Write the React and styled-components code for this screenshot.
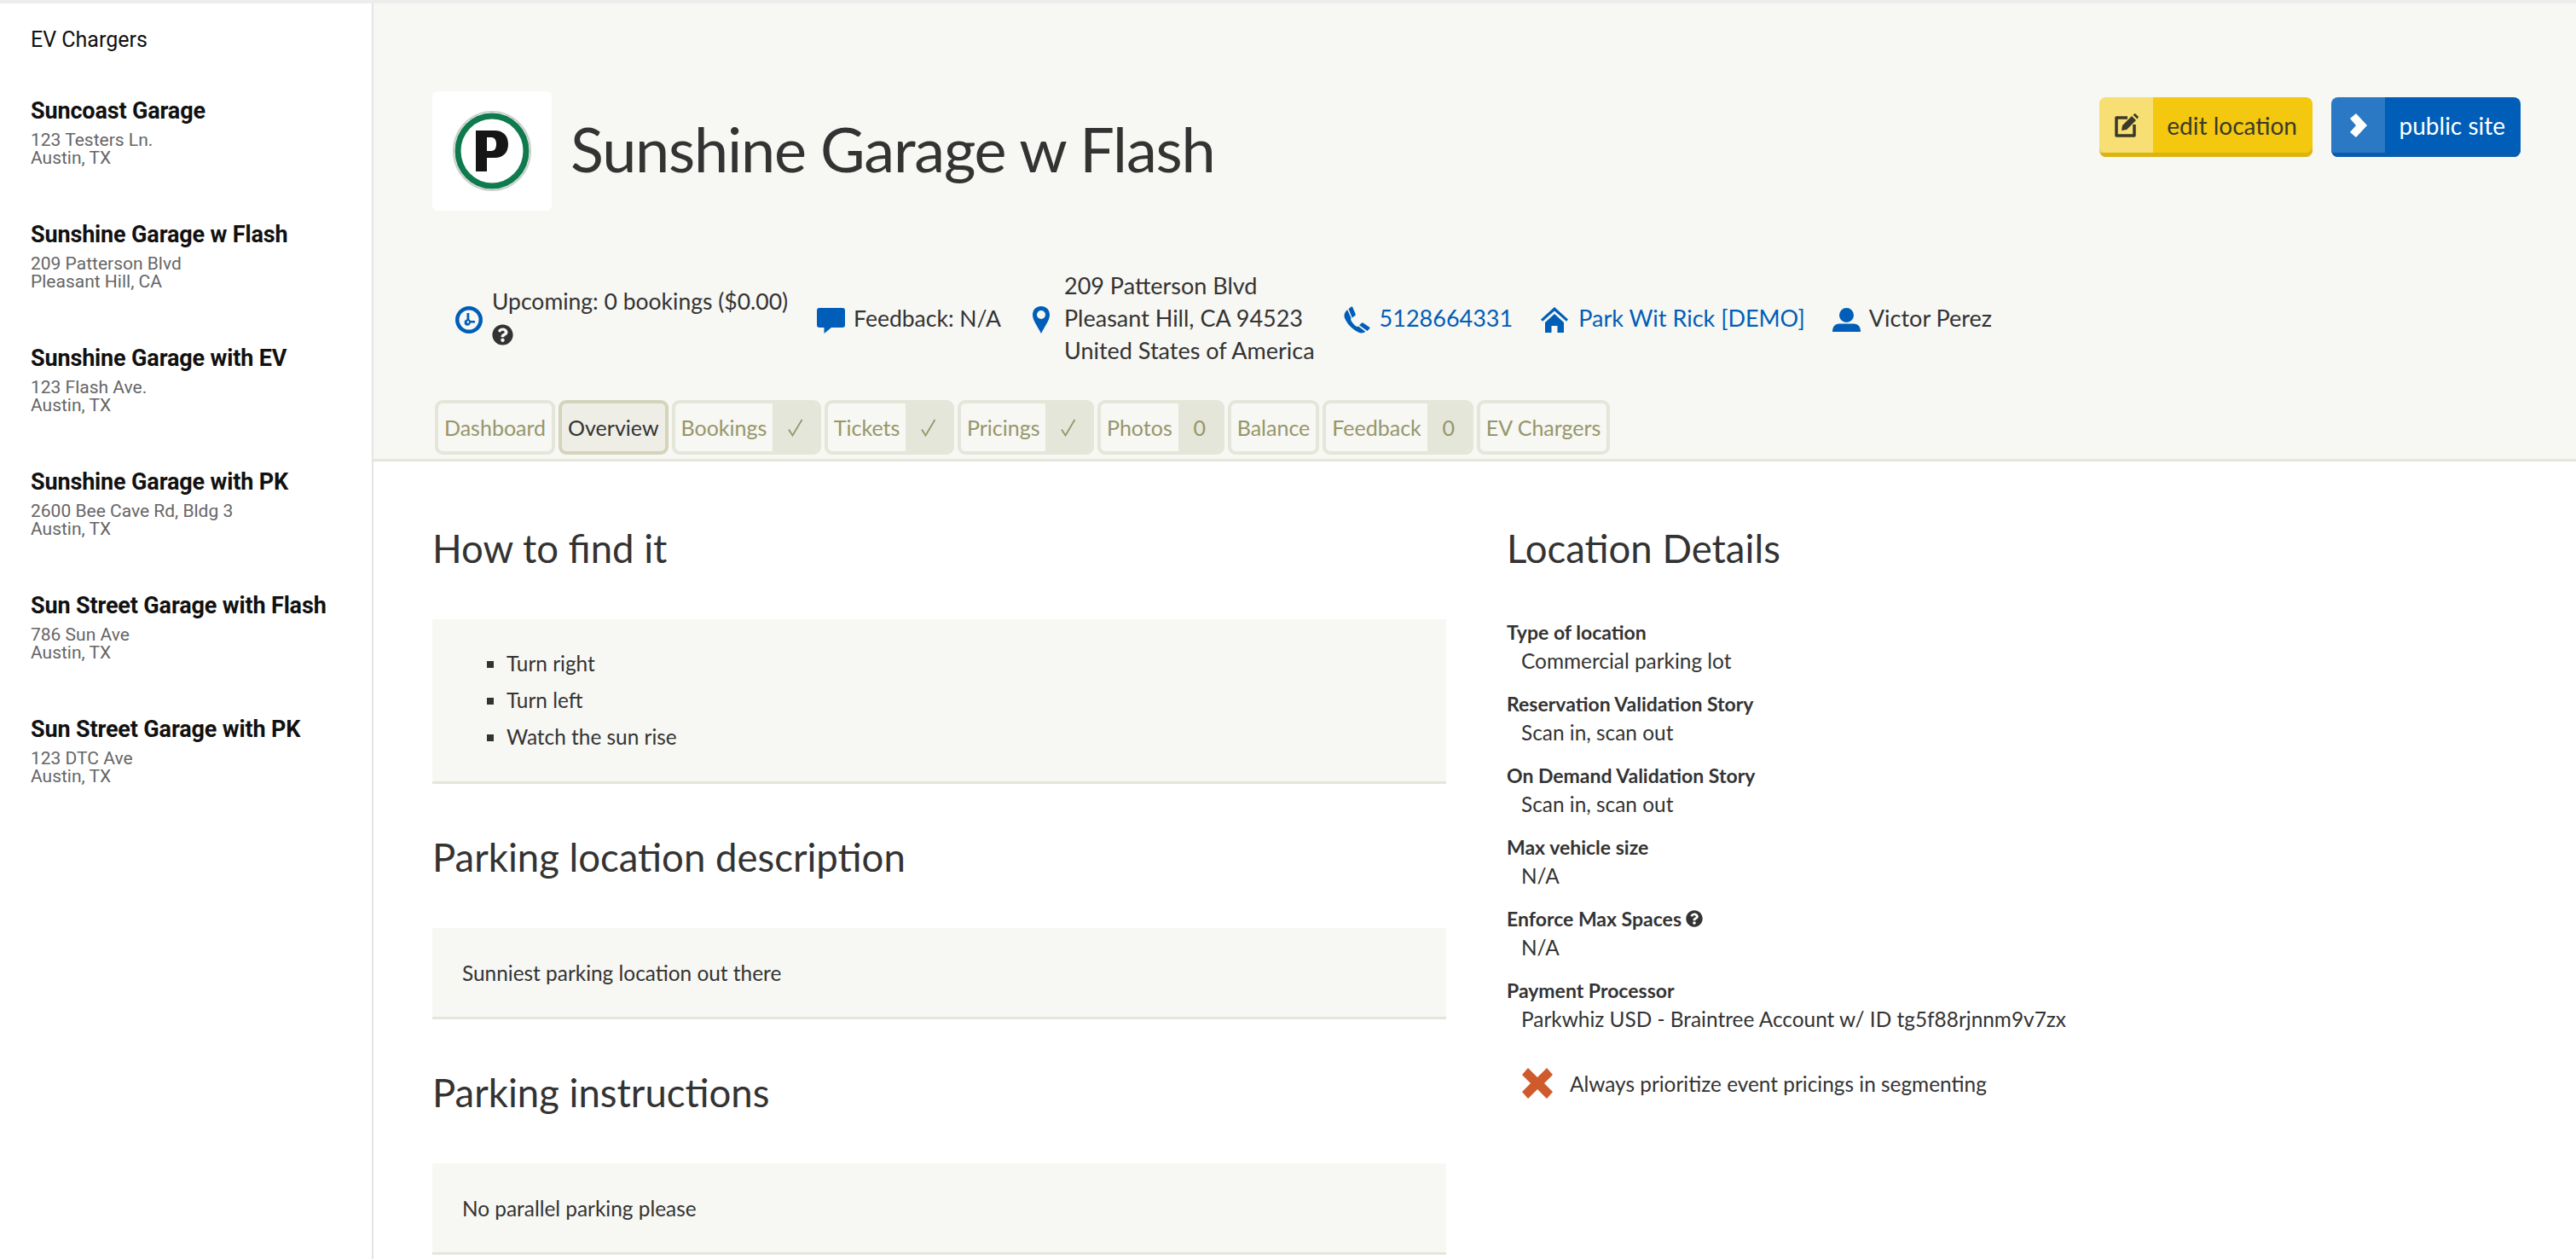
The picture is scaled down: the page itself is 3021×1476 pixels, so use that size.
import React from 'react';
import styled, { createGlobalStyle } from 'styled-components';
import { FaQuestionCircle } from 'react-icons/fa';

const GlobalStyle = createGlobalStyle`
   html, body {
      margin: 0;
      height: 100%;
      background: #fff;
      overflow: hidden;
   }
   * { box-sizing: border-box; }
`;

const Page = styled.div`
   display: flex;
   height: 1476px;
   overflow: hidden;
   font-family: Lato, sans-serif;
   color: #333;
   border-top: 4px solid #eceded;
`;

const Sidebar = styled.aside`
   width: 438px;
   flex: none;
   padding: 28px 36px 0;
   border-right: 2px solid #e4e4e4;
   font-family: Roboto, sans-serif;
   color: #111;
`;

const SideTitle = styled.div`
   font-size: 25px;
   line-height: 30px;
   margin-bottom: 52px;
`;

const SideItem = styled.div`
   height: 145px;
`;

const SideName = styled.div`
   font-size: 27px;
   line-height: 32px;
   font-weight: 700;
   letter-spacing: -0.15px;
   margin-bottom: 8px;
   white-space: nowrap;
`;

const SideAddr = styled.div`
   font-size: 21px;
   line-height: 21px;
   color: #666;
`;

const Main = styled.main`
   flex: 1;
   min-width: 0;
`;

const Header = styled.header`
   background: #f7f7f3;
   height: 537px;
   padding: 103px 65px 0 69px;
   border-bottom: 3px solid #e5e6da;
   display: flex;
   flex-direction: column;
`;

const TopRow = styled.div`
   display: flex;
   justify-content: space-between;
   align-items: flex-start;
   height: 140px;
`;

const TitleWrap = styled.div`
   display: flex;
   align-items: center;
   gap: 22px;
`;

const LogoBox = styled.div`
   width: 140px;
   height: 140px;
   background: #fff;
   border-radius: 6px;
   display: flex;
   align-items: center;
   justify-content: center;
`;

const Title = styled.h1`
   margin: 0 0 6px;
   font-size: 72px;
   font-weight: 400;
   letter-spacing: -1.2px;
   color: #333;
`;

const Buttons = styled.div`
   display: flex;
   gap: 22px;
   margin-top: 7px;
`;

const ActionButton = styled.a`
   display: flex;
   height: 70px;
   width: ${({ $w }) => $w}px;
   border-radius: 8px;
   overflow: hidden;
   font-size: 28px;
   color: ${({ $blue }) => ($blue ? '#fff' : '#3a3a2a')};
   background: ${({ $blue }) => ($blue ? '#005eb8' : '#f3c80f')};
   box-shadow: inset 0 -5px 0 ${({ $blue }) => ($blue ? '#0a5cb0' : '#dcb40e')};
`;

const ButtonIcon = styled.span`
   width: 63px;
   height: 65px;
   display: flex;
   align-items: center;
   justify-content: center;
   background: rgba(255, 255, 255, ${({ $blue }) => ($blue ? 0.17 : 0.42)});
`;

const ButtonText = styled.span`
   flex: 1;
   height: 65px;
   display: flex;
   align-items: center;
   justify-content: flex-end;
   padding-right: 18px;
`;

const MetaRow = styled.div`
   display: flex;
   align-items: center;
   margin-top: 69px;
   padding-left: 27px;
   line-height: 38px;
   height: 114px;
   white-space: nowrap;
`;

const MetaItem = styled.div`
   display: flex;
   align-items: center;
   font-size: ${({ $small }) => ($small ? 26.5 : 27)}px;
   margin-right: ${({ $gap }) => $gap}px;
   color: ${({ $link }) => ($link ? '#005eb8' : '#333')};
`;

const MetaIcon = styled.svg`
   flex: none;
   fill: #005eb8;
   width: ${({ $w }) => $w}px;
   height: 32px;
   margin-top: 4px;
   margin-right: ${({ $mr }) => $mr}px;
`;

const HelpIcon = styled(FaQuestionCircle)`
   display: block;
   font-size: ${({ $size }) => $size}px;
   color: #333;
`;

const UpcomingHelp = styled(HelpIcon)`
   margin: 8px 0;
`;

const TabRow = styled.nav`
   display: flex;
   gap: 4px;
   margin-top: auto;
   margin-left: 3px;
   height: 69px;
   padding-bottom: 5px;
`;

const Tab = styled.div`
   display: flex;
   height: 64px;
   border: 4px solid ${({ $active }) => ($active ? '#d3d4bb' : '#e5e6da')};
   border-radius: 9px;
   overflow: hidden;
   font-size: 25px;
   color: ${({ $active }) => ($active ? '#333' : '#96966a')};
   background: ${({ $active }) => ($active ? '#eeeee6' : '#f7f7f3')};
`;

const TabLabel = styled.span`
   display: flex;
   align-items: center;
   padding: 0 7px;
`;

const TabCount = styled.span`
   display: flex;
   align-items: center;
   justify-content: center;
   width: ${({ $w }) => $w}px;
   background: #e5e6da;
`;

const Content = styled.div`
   display: flex;
   padding: 16px 0 0 69px;
`;

const LeftCol = styled.section`
   width: 1189px;
   flex: none;
`;

const RightCol = styled.section`
   margin-left: 71px;
`;

const SectionHead = styled.h2`
   margin: 0 0 55px;
   font-size: 45.5px;
   font-weight: 400;
   line-height: 56px;
   padding-top: 58px;
   color: #333;
`;

const Panel = styled.div`
   background: #f7f7f3;
   border-bottom: 3px solid #e5e6da;
   padding: 0 35px;
   font-size: 24.4px;
   min-height: 107px;
   display: flex;
   align-items: center;
`;

const Steps = styled.ul`
   list-style: square;
   margin: 0;
   padding: 30px 0 31px 52px;
   li { line-height: 43px; }
`;

const DetailList = styled.dl`
   margin: -2px 0 0;
`;

const DetailLabel = styled.dt`
   font-size: 23px;
   font-weight: 700;
   line-height: 34px;
   display: flex;
   align-items: center;
   gap: 5px;
`;

const DetailValue = styled.dd`
   margin: 0 0 16px 17px;
   font-size: 24.4px;
   line-height: 34px;
`;

const FlagRow = styled.div`
   display: flex;
   align-items: center;
   gap: 20px;
   margin: 40px 0 0 18px;
   font-size: 24.4px;
`;

const sideItems = [
   ['Suncoast Garage', '123 Testers Ln.', 'Austin, TX'],
   ['Sunshine Garage w Flash', '209 Patterson Blvd', 'Pleasant Hill, CA'],
   ['Sunshine Garage with EV', '123 Flash Ave.', 'Austin, TX'],
   ['Sunshine Garage with PK', '2600 Bee Cave Rd, Bldg 3', 'Austin, TX'],
   ['Sun Street Garage with Flash', '786 Sun Ave', 'Austin, TX'],
   ['Sun Street Garage with PK', '123 DTC Ave', 'Austin, TX'],
];

const tabs = [
   { label: 'Dashboard' },
   { label: 'Overview', active: true },
   { label: 'Bookings', checked: true },
   { label: 'Tickets', checked: true },
   { label: 'Pricings', checked: true },
   { label: 'Photos', count: '0' },
   { label: 'Balance' },
   { label: 'Feedback', count: '0' },
   { label: 'EV Chargers' },
];

const details = [
   ['Type of location', 'Commercial parking lot'],
   ['Reservation Validation Story', 'Scan in, scan out'],
   ['On Demand Validation Story', 'Scan in, scan out'],
   ['Max vehicle size', 'N/A'],
   ['Enforce Max Spaces', 'N/A', true],
   ['Payment Processor', 'Parkwhiz USD - Braintree Account w/ ID tg5f88rjnnm9v7zx'],
];

const ParkingLogo = () => (
   <svg width="100" height="100" viewBox="0 0 100 100">
      <ellipse cx="50" cy="50" rx="45" ry="46" fill="#fff" stroke="#c9cfcb" strokeWidth="2" />
      <ellipse cx="50" cy="50" rx="40" ry="41" fill="none" stroke="#0e7a4d" strokeWidth="7" />
      <path fillRule="evenodd" fill="#161616" d="M31 26h22c10 0 16 6 16 16s-6 16-16 16h-9v16H31zM44 34v16h5c4 0 6-3 6-8s-2-8-6-8z" />
   </svg>
);

const CheckMark = () => (
   <svg width="18" height="21" viewBox="0 0 18 21" fill="none" stroke="#96966a" strokeWidth="1.800">
      <path d="M1 12.500L5.500 19.500L16.500 1" />
   </svg>
);

const App = () => (
   <Page>
      <GlobalStyle />
      <Sidebar>
         <SideTitle>EV Chargers</SideTitle>
         {sideItems.map(([name, line1, line2]) => (
            <SideItem key={name}>
               <SideName>{name}</SideName>
               <SideAddr>{line1}</SideAddr>
               <SideAddr>{line2}</SideAddr>
            </SideItem>
         ))}
      </Sidebar>
      <Main>
         <Header>
            <TopRow>
               <TitleWrap>
                  <LogoBox><ParkingLogo /></LogoBox>
                  <Title>Sunshine Garage w Flash</Title>
               </TitleWrap>
               <Buttons>
                  <ActionButton $w={250}>
                     <ButtonIcon>
                        <svg width="28" height="28" viewBox="0 0 28 28">
                           <path fill="none" stroke="#3a3a2a" strokeWidth="3.500" strokeLinejoin="round" d="M15 5H2v21h21V13" />
                           <path fill="#3a3a2a" d="M8 20l1-6L20 3l5 5-11 11zM21.500 1.500L24 0l4 4-1.500 2.500z" />
                        </svg>
                     </ButtonIcon>
                     <ButtonText>edit location</ButtonText>
                  </ActionButton>
                  <ActionButton $w={222} $blue>
                     <ButtonIcon $blue>
                        <svg width="20" height="28" viewBox="0 0 20 28" fill="#fff"><path d="M0 6l7-6 13 14L7 28l-7-6 7-8z" /></svg>
                     </ButtonIcon>
                     <ButtonText>public site</ButtonText>
                  </ActionButton>
               </Buttons>
            </TopRow>
            <MetaRow>
               <MetaItem $gap={34} $small>
                  <MetaIcon $w={32} $mr={11} viewBox="0 0 32 32">
                     <path fillRule="evenodd" d="M16 0a16 16 0 1 1 0 32 16 16 0 0 1 0-32zm0 4.500a11.500 11.500 0 1 0 0 23 11.500 11.500 0 0 0 0-23z" />
                     <path fillRule="evenodd" d="M13.500 8h2.800v7.600c.7.300 1.200.8 1.500 1.400H23v2.600h-5.200a3.600 3.600 0 1 1-4.300-4zm1.300 9.300a1.300 1.300 0 1 0 0 2.600 1.300 1.300 0 0 0 0-2.600z" />
                  </MetaIcon>
                  <div>
                     Upcoming: 0 bookings ($0.00)
                     <UpcomingHelp $size={25} />
                  </div>
               </MetaItem>
               <MetaItem $gap={37} $small>
                  <MetaIcon $w={33} $mr={10} viewBox="0 0 33 32">
                     <path d="M3 2h27a3 3 0 0 1 3 3v17a3 3 0 0 1-3 3H17l-8.500 7v-7H3a3 3 0 0 1-3-3V5a3 3 0 0 1 3-3z" />
                  </MetaIcon>
                  Feedback: N/A
               </MetaItem>
               <MetaItem $gap={34}>
                  <MetaIcon $w={20} $mr={17} viewBox="0 0 20 32">
                     <path fillRule="evenodd" d="M10 0c5.800 0 10 4.300 10 10 0 6.500-5.500 13-10 22C5.500 23 0 16.500 0 10 0 4.300 4.200 0 10 0zm0 5a5 5 0 1 0 0 10 5 5 0 0 0 0-10z" />
                  </MetaIcon>
                  <div>
                     <div>209 Patterson Blvd</div>
                     <div>Pleasant Hill, CA 94523</div>
                     <div>United States of America</div>
                  </div>
               </MetaItem>
               <MetaItem $gap={33} $link>
                  <MetaIcon $w={31} $mr={11} viewBox="0 0 31 32">
                     <path d="M5.500 3.200L9 .3l1.200.6 3.600 8.600-.3 1.200-3.700 2.700z" />
                     <path d="M4.200 4.200l4.400 9.900c-.6.700-.6 1.500-.2 2.400 1.500 3 3.500 5.500 6.300 7.200.8.400 1.600.400 2.300-.2l8.300 6.200c-2 1.600-4.600 2.200-7.200 1.300C10 27.500 3.500 20.500.8 13.200-.3 9.800 1.500 6 4.200 4.200z" />
                     <path d="M18 22.300l3.300-3 1.200.1 7.800 5.400.2 1.100-3 3.200z" />
                  </MetaIcon>
                  5128664331
               </MetaItem>
               <MetaItem $gap={32} $link>
                  <MetaIcon $w={32} $mr={12} viewBox="0 0 32 32">
                     <path d="M16 1L32 15.500l-2 2.300L16 5.500 2 17.800l-2-2.300z" />
                     <path d="M16 9L27 19v12h-7.500v-8h-7v8H5V19z" />
                  </MetaIcon>
                  Park Wit Rick [DEMO]
               </MetaItem>
               <MetaItem $gap={0}>
                  <MetaIcon $w={33} $mr={10} viewBox="0 0 33 32">
                     <path d="M16.500 2a8.500 8.500 0 1 1 0 17 8.500 8.500 0 0 1 0-17z" />
                     <path d="M8 20.500h17c5 0 8 3.500 8 9.500H0c0-6 3-9.500 8-9.500z" />
                  </MetaIcon>
                  Victor Perez
               </MetaItem>
            </MetaRow>
            <TabRow>
               {tabs.map((tab) => (
                  <Tab key={tab.label} $active={tab.active}>
                     <TabLabel>{tab.label}</TabLabel>
                     {tab.checked && <TabCount $w={52.5}><CheckMark /></TabCount>}
                     {tab.count && <TabCount $w={50}>{tab.count}</TabCount>}
                  </Tab>
               ))}
            </TabRow>
         </Header>
         <Content>
            <LeftCol>
               <SectionHead>How to find it</SectionHead>
               <Panel>
                  <Steps>
                     <li>Turn right</li>
                     <li>Turn left</li>
                     <li>Watch the sun rise</li>
                  </Steps>
               </Panel>
               <SectionHead>Parking location description</SectionHead>
               <Panel>Sunniest parking location out there</Panel>
               <SectionHead>Parking instructions</SectionHead>
               <Panel>No parallel parking please</Panel>
            </LeftCol>
            <RightCol>
               <SectionHead>Location Details</SectionHead>
               <DetailList>
                  {details.map(([label, value, help]) => (
                     <React.Fragment key={label}>
                        <DetailLabel>{label}{help && <HelpIcon $size={20} />}</DetailLabel>
                        <DetailValue>{value}</DetailValue>
                     </React.Fragment>
                  ))}
               </DetailList>
               <FlagRow>
                  <svg width="36" height="36" viewBox="0 0 36 36" fill="#cf5a2c"><path d="M7 0l11 11L29 0l7 8-10 10 10 10-7 8-11-11L7 36l-7-8 10-10L0 8z" /></svg>
                  Always prioritize event pricings in segmenting
               </FlagRow>
            </RightCol>
         </Content>
      </Main>
   </Page>
);

export default App;
